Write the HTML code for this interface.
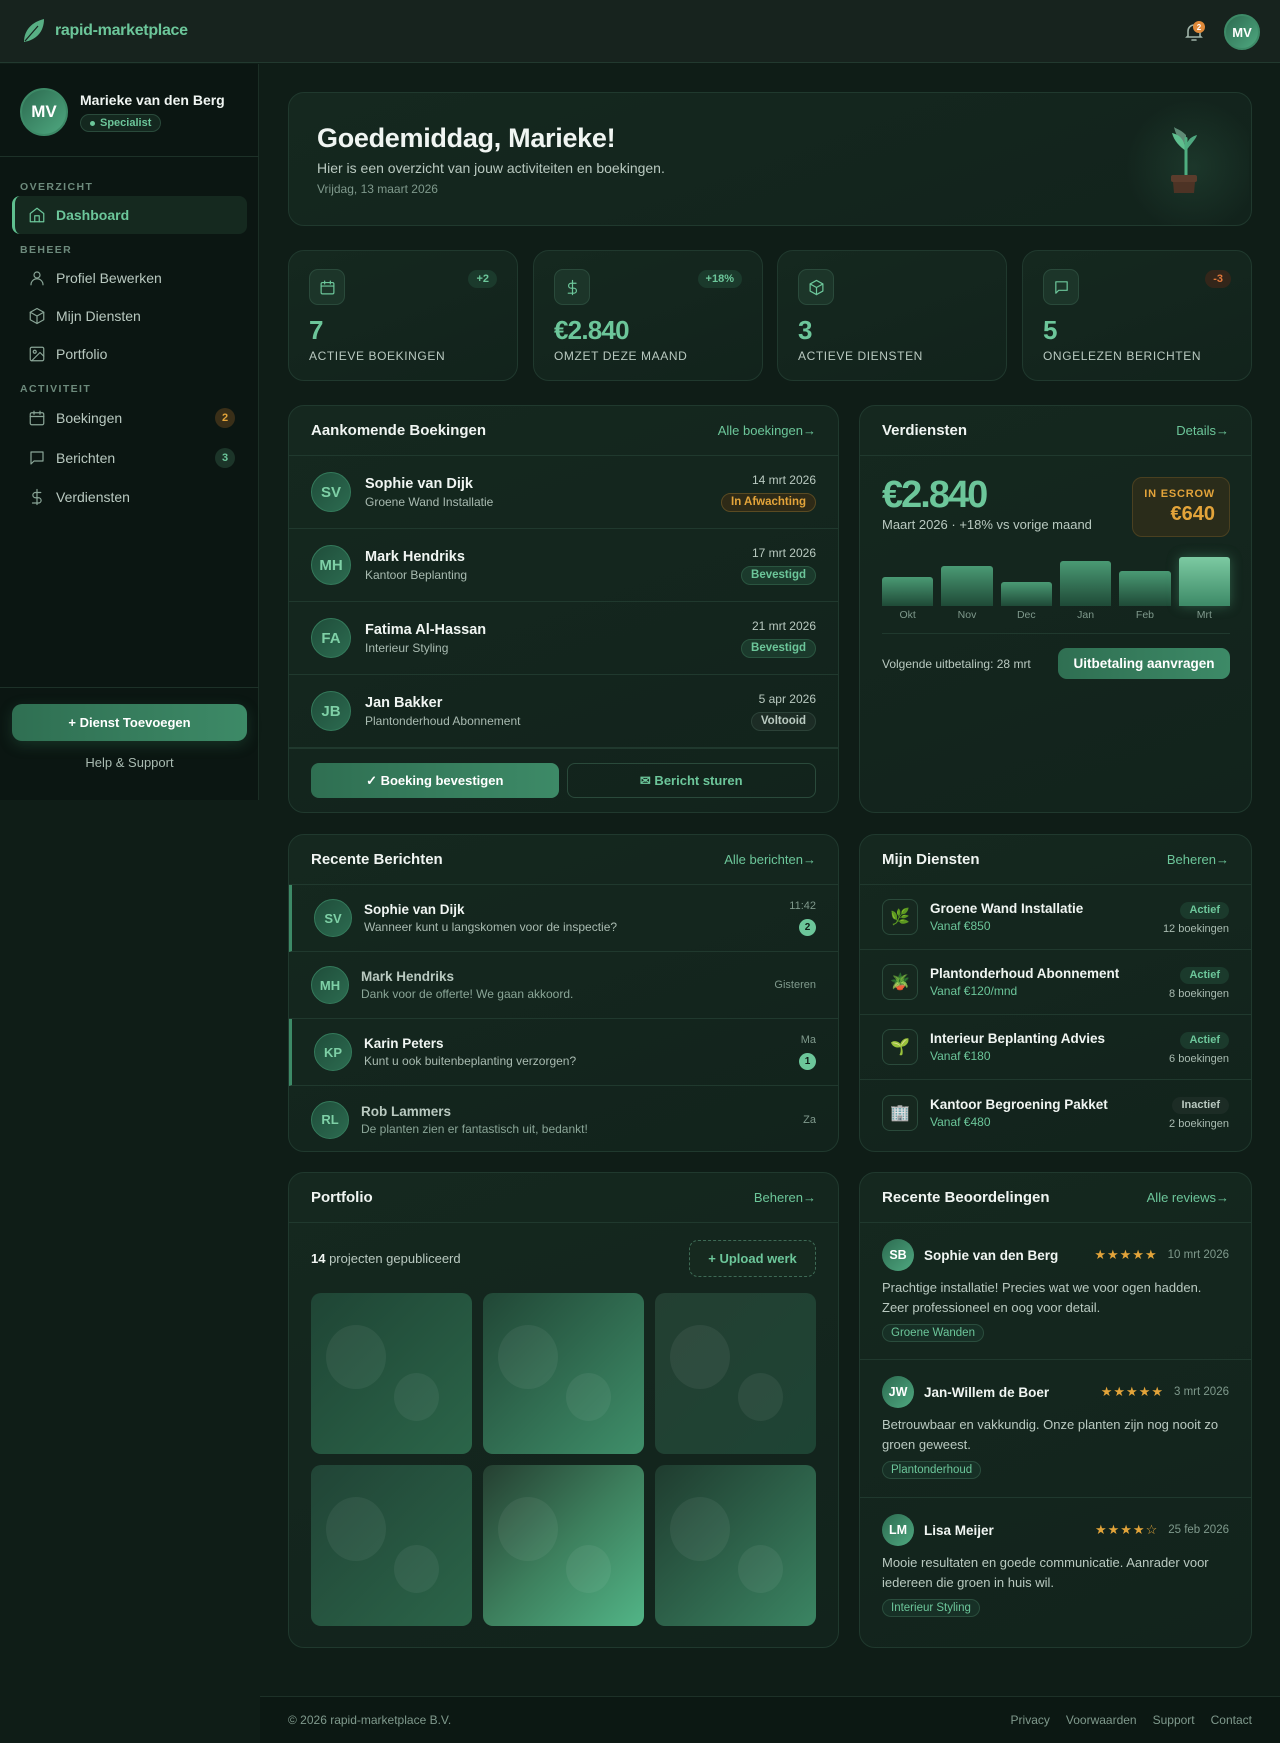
<!DOCTYPE html>
<html><head><meta charset="utf-8">
<style>
*{box-sizing:border-box;margin:0;padding:0}
body{width:1280px;height:1743px;background:#0f1d17;font-family:"Liberation Sans",sans-serif;color:#e6efe9;position:relative;overflow:hidden}
.hdr{position:absolute;left:0;top:0;width:1280px;height:63px;background:#17231e;border-bottom:1px solid #22392f}
.logo{position:absolute;left:22px;top:18px;display:flex;align-items:center;gap:9px;color:#6cc69a;font-weight:bold;font-size:16px;letter-spacing:-0.3px}
.side{position:absolute;left:0;top:64px;width:259px;height:736px;background:#0b1612;border-right:1px solid #1b2e25}
.av{border-radius:50%;background:linear-gradient(135deg,#2c6b50,#4fa880);color:#fff;font-weight:bold;display:flex;align-items:center;justify-content:center;border:2px solid #3d8a67}
.lbl{position:absolute;left:20px;font-size:10.5px;font-weight:bold;letter-spacing:1.4px;color:#6d8a7c}
.nav{position:absolute;left:12px;width:235px;height:38px;display:flex;align-items:center;padding-left:16px;gap:10px;font-size:14px;color:#b9c9c0}
.nav svg{width:18px;height:18px;stroke:#8aa597;fill:none;stroke-width:1.6;stroke-linecap:round;stroke-linejoin:round}
.nav.act{background:#15291f;border-left:3px solid #5fbf8f;border-radius:8px;color:#6cc69a;font-weight:bold;padding-left:13px}
.nav.act svg{stroke:#6cc69a}
.bd{position:absolute;right:12px;width:20px;height:20px;border-radius:50%;font-size:11px;font-weight:bold;display:flex;align-items:center;justify-content:center}
.card{position:absolute;background:linear-gradient(160deg,#15281f,#12231c);border:1px solid #20392e;border-radius:16px;overflow:hidden}
.ch{height:50px;border-bottom:1px solid #20392e;display:flex;align-items:center;justify-content:space-between;padding:0 22px}
.ch b{font-size:15px;color:#f0f5f2}
.ch span{font-size:13px;color:#6cc69a}
.stat{top:250px;width:230px;height:131px}
.sico{position:absolute;left:20px;top:18px;width:36px;height:36px;border-radius:9px;background:#1c3529;border:1px solid #2a4a3b;display:flex;align-items:center;justify-content:center}
.sico svg{width:17px;height:17px;stroke:#6cc69a;fill:none;stroke-width:1.7;stroke-linecap:round;stroke-linejoin:round}
.snum{position:absolute;left:20px;top:64px;font-size:26px;font-weight:bold;color:#6cc69a;letter-spacing:-0.8px}
.stxt{position:absolute;left:20px;top:98px;font-size:12px;color:#b9c9c0;letter-spacing:0.6px}
.chip{position:absolute;right:20px;top:19px;height:18px;padding:0 8px;border-radius:9px;font-size:11px;font-weight:bold;display:flex;align-items:center}
.row{display:flex;align-items:center;border-bottom:1px solid #20392e;padding:0 22px}
.ra{width:40px;height:40px;font-size:15px;color:#7ed0a6;background:linear-gradient(135deg,#1f4d3a,#2c6b50);border:1px solid #347a5b}
.nm{font-size:14.5px;font-weight:bold;color:#f0f5f2}
.sb{font-size:12px;color:#a9bbb1;margin-top:3px}
.pill{display:inline-block;height:19px;line-height:17px;padding:0 9px;border-radius:10px;font-size:11.5px;font-weight:bold}
.pg{background:#1b3a2c;border:1px solid #2a5540;color:#6cc69a}
.tile{position:absolute;width:161px;height:161px;border-radius:10px;overflow:hidden}
.tile i{position:absolute;border-radius:50%;background:rgba(255,255,255,0.06)}
.rv{border-bottom:1px solid #20392e;padding:16px 22px 0}
.tag{display:inline-block;height:18px;line-height:16px;padding:0 8px;border-radius:9px;background:#173026;border:1px solid #2a4d3d;color:#6cc69a;font-size:11.5px}
.st{color:#e3a43a;font-size:13px;letter-spacing:1px}
</style></head><body>

<div class="hdr">
 <div class="logo"><svg width="24" height="26" viewBox="0 0 24 26"><path d="M2 24 C2 12 10 4 22 1 C22 14 14 22 2 24Z" fill="#5fbf8f" opacity="0.9"/><path d="M3 23 L16 8" stroke="#17231e" stroke-width="1.2"/></svg>rapid-marketplace</div>
 <svg style="position:absolute;left:1185px;top:22px" width="18" height="20" viewBox="0 0 18 20" fill="none" stroke="#9fb3a8" stroke-width="1.6" stroke-linecap="round"><path d="M3 14 V9 a6 6 0 0 1 12 0 V14 L16 15 H2 Z"/><path d="M7 18 h4"/></svg>
 <div style="position:absolute;left:1193px;top:21px;width:12px;height:12px;border-radius:50%;background:#e08a3a;color:#fff;font-size:8px;font-weight:bold;display:flex;align-items:center;justify-content:center">2</div>
 <div class="av" style="position:absolute;left:1224px;top:14px;width:36px;height:36px;font-size:13px">MV</div>
</div>

<div class="side">
 <div class="av" style="position:absolute;left:20px;top:24px;width:48px;height:48px;font-size:17px">MV</div>
 <div style="position:absolute;left:80px;top:28px;font-size:14px;font-weight:bold;color:#f0f5f2">Marieke van den Berg</div>
 <div style="position:absolute;left:80px;top:50px;height:18px;padding:0 9px;border-radius:9px;background:#14281f;border:1px solid #2a4a3b;font-size:11px;font-weight:bold;color:#6cc69a;display:flex;align-items:center;gap:5px"><span style="width:5px;height:5px;border-radius:50%;background:#6cc69a"></span>Specialist</div>
 <div style="position:absolute;left:0;top:92px;width:259px;border-top:1px solid #1d3128"></div>
 <div class="lbl" style="top:117px">OVERZICHT</div>
 <div class="nav act" style="top:132px"><svg viewBox="0 0 24 24"><path d="M3 10 L12 3 L21 10 V21 H3 Z"/><path d="M9 21 V13 H15 V21"/></svg>Dashboard</div>
 <div class="lbl" style="top:180px">BEHEER</div>
 <div class="nav" style="top:195px"><svg viewBox="0 0 24 24"><circle cx="12" cy="8" r="4"/><path d="M4 21 a8 8 0 0 1 16 0"/></svg>Profiel Bewerken</div>
 <div class="nav" style="top:233px"><svg viewBox="0 0 24 24"><path d="M12 2 L21 7 V17 L12 22 L3 17 V7 Z"/><path d="M3 7 L12 12 L21 7 M12 12 V22"/></svg>Mijn Diensten</div>
 <div class="nav" style="top:271px"><svg viewBox="0 0 24 24"><rect x="3" y="3" width="18" height="18" rx="2"/><circle cx="9" cy="9" r="2"/><path d="M21 15 L16 10 L5 21"/></svg>Portfolio</div>
 <div class="lbl" style="top:319px">ACTIVITEIT</div>
 <div class="nav" style="top:335px"><svg viewBox="0 0 24 24"><rect x="3" y="5" width="18" height="16" rx="2"/><path d="M3 10 H21 M8 3 V7 M16 3 V7"/></svg>Boekingen<span class="bd" style="background:#3a2f18;color:#e3a43a;top:9px">2</span></div>
 <div class="nav" style="top:375px"><svg viewBox="0 0 24 24"><path d="M4 4 H20 V16 H8 L4 20 Z"/></svg>Berichten<span class="bd" style="background:#1c3529;color:#6cc69a;top:9px">3</span></div>
 <div class="nav" style="top:414px"><svg viewBox="0 0 24 24"><path d="M12 2 V22 M17 6 H10 a3.5 3.5 0 0 0 0 7 H14 a3.5 3.5 0 0 1 0 7 H6"/></svg>Verdiensten</div>
 <div style="position:absolute;left:0;top:623px;width:259px;border-top:1px solid #1d3128"></div>
 <div style="position:absolute;left:12px;top:640px;width:235px;height:37px;border-radius:10px;background:linear-gradient(90deg,#2f6f52,#3d8a67);color:#fff;font-weight:bold;font-size:13px;display:flex;align-items:center;justify-content:center;box-shadow:0 4px 14px rgba(60,140,100,0.25)">+ Dienst Toevoegen</div>
 <div style="position:absolute;left:0;top:691px;width:259px;text-align:center;font-size:13px;color:#a9bbb1">Help &amp; Support</div>
</div>

<!-- Welcome -->
<div class="card" style="left:288px;top:92px;width:964px;height:134px">
 <div style="position:absolute;left:28px;top:30px;font-size:27px;font-weight:bold;color:#f0f5f2;letter-spacing:-0.3px">Goedemiddag, Marieke!</div>
 <div style="position:absolute;left:28px;top:67px;font-size:14px;color:#b9c9c0">Hier is een overzicht van jouw activiteiten en boekingen.</div>
 <div style="position:absolute;left:28px;top:89px;font-size:12px;color:#7f998c">Vrijdag, 13 maart 2026</div>
 <div style="position:absolute;left:820px;top:0;width:140px;height:134px;background:radial-gradient(circle at 60% 55%,rgba(95,191,143,0.12),transparent 60%)"></div>
 <svg style="position:absolute;left:877px;top:30px" width="40" height="70" viewBox="0 0 40 70"><path d="M20 12 C14 6 10 6 8 4 C10 12 12 16 20 22Z" fill="#8fc9ad" opacity="0.6"/><path d="M20 28 C14 24 8 18 6 10 C14 12 18 16 20 28Z" fill="#5fbf8f"/><path d="M20 28 C24 22 30 16 31 12 C24 14 20 18 20 28Z" fill="#4fa880"/><rect x="18.5" y="14" width="3" height="40" fill="#4fae80" rx="1.5"/><rect x="5" y="52" width="26" height="7" rx="2" fill="#5b3c2c"/><path d="M7 59 H29 L28 70 H8 Z" fill="#4d3325"/></svg>
</div>

<!-- stats -->
<div class="card stat" style="left:288px"><div class="sico"><svg viewBox="0 0 24 24"><rect x="3" y="5" width="18" height="16" rx="2"/><path d="M3 10 H21 M8 3 V7 M16 3 V7"/></svg></div><div class="chip" style="background:#1b3a2c;color:#6cc69a">+2</div><div class="snum">7</div><div class="stxt">ACTIEVE BOEKINGEN</div></div>
<div class="card stat" style="left:533px"><div class="sico"><svg viewBox="0 0 24 24"><path d="M12 2 V22 M17 6 H10 a3.5 3.5 0 0 0 0 7 H14 a3.5 3.5 0 0 1 0 7 H6"/></svg></div><div class="chip" style="background:#1b3a2c;color:#6cc69a">+18%</div><div class="snum">€2.840</div><div class="stxt">OMZET DEZE MAAND</div></div>
<div class="card stat" style="left:777px"><div class="sico"><svg viewBox="0 0 24 24"><path d="M12 2 L21 7 V17 L12 22 L3 17 V7 Z"/><path d="M3 7 L12 12 L21 7 M12 12 V22"/></svg></div><div class="snum">3</div><div class="stxt">ACTIEVE DIENSTEN</div></div>
<div class="card stat" style="left:1022px"><div class="sico"><svg viewBox="0 0 24 24"><path d="M4 4 H20 V16 H8 L4 20 Z"/></svg></div><div class="chip" style="background:#33261a;color:#e0783a">-3</div><div class="snum">5</div><div class="stxt">ONGELEZEN BERICHTEN</div></div>

<!-- bookings -->
<div class="card" style="left:288px;top:405px;width:551px;height:408px">
 <div class="ch"><b>Aankomende Boekingen</b><span>Alle boekingen→</span></div>
 <div class="row" style="height:73px"><div class="av ra">SV</div><div style="margin-left:14px;flex:1"><div class="nm">Sophie van Dijk</div><div class="sb">Groene Wand Installatie</div></div><div style="text-align:right"><div style="font-size:12px;color:#b9c9c0;margin-bottom:5px">14 mrt 2026</div><span class="pill" style="background:#2e2a17;border:1px solid #5a4a22;color:#e3a43a">In Afwachting</span></div></div>
 <div class="row" style="height:73px"><div class="av ra">MH</div><div style="margin-left:14px;flex:1"><div class="nm">Mark Hendriks</div><div class="sb">Kantoor Beplanting</div></div><div style="text-align:right"><div style="font-size:12px;color:#b9c9c0;margin-bottom:5px">17 mrt 2026</div><span class="pill pg">Bevestigd</span></div></div>
 <div class="row" style="height:73px"><div class="av ra">FA</div><div style="margin-left:14px;flex:1"><div class="nm">Fatima Al-Hassan</div><div class="sb">Interieur Styling</div></div><div style="text-align:right"><div style="font-size:12px;color:#b9c9c0;margin-bottom:5px">21 mrt 2026</div><span class="pill pg">Bevestigd</span></div></div>
 <div class="row" style="height:74px;border-bottom:2px solid #20392e"><div class="av ra">JB</div><div style="margin-left:14px;flex:1"><div class="nm">Jan Bakker</div><div class="sb">Plantonderhoud Abonnement</div></div><div style="text-align:right"><div style="font-size:12px;color:#b9c9c0;margin-bottom:5px">5 apr 2026</div><span class="pill" style="background:#1c2c25;border:1px solid #2c4238;color:#b9c9c0">Voltooid</span></div></div>
 <div style="display:flex;gap:8px;padding:14px 22px 0">
  <div style="flex:1;height:35px;border-radius:8px;background:linear-gradient(90deg,#2f6f52,#3d8a67);color:#fff;font-weight:bold;font-size:13px;display:flex;align-items:center;justify-content:center">✓ Boeking bevestigen</div>
  <div style="flex:1;height:35px;border-radius:8px;border:1px solid #2a4a3b;color:#6cc69a;font-weight:bold;font-size:13px;display:flex;align-items:center;justify-content:center">✉ Bericht sturen</div>
 </div>
</div>

<!-- earnings -->
<div class="card" style="left:859px;top:405px;width:393px;height:408px">
 <div class="ch"><b>Verdiensten</b><span>Details→</span></div>
 <div style="position:absolute;left:22px;top:68px;font-size:38px;font-weight:bold;color:#6cc69a;letter-spacing:-2px">€2.840</div>
 <div style="position:absolute;left:22px;top:111px;font-size:13px;color:#b9c9c0">Maart 2026 · +18% vs vorige maand</div>
 <div style="position:absolute;left:272px;top:71px;width:98px;height:60px;border-radius:10px;background:#2a2c1a;border:1px solid #4a4020;text-align:right;padding:10px 14px 0 0"><div style="font-size:11px;font-weight:bold;color:#e3a43a;letter-spacing:0.8px">IN ESCROW</div><div style="font-size:20px;font-weight:bold;color:#e3a43a;margin-top:3px">€640</div></div>
 <div style="position:absolute;left:22px;top:140px;width:348px;height:60px;display:flex;gap:8px;align-items:flex-end">
  <div style="flex:1;height:29px;border-radius:3px 3px 0 0;background:linear-gradient(#4a9a74,#1f4a37)"></div>
  <div style="flex:1;height:40px;border-radius:3px 3px 0 0;background:linear-gradient(#4a9a74,#1f4a37)"></div>
  <div style="flex:1;height:24px;border-radius:3px 3px 0 0;background:linear-gradient(#4a9a74,#1f4a37)"></div>
  <div style="flex:1;height:45px;border-radius:3px 3px 0 0;background:linear-gradient(#4a9a74,#1f4a37)"></div>
  <div style="flex:1;height:35px;border-radius:3px 3px 0 0;background:linear-gradient(#4a9a74,#1f4a37)"></div>
  <div style="flex:1;height:49px;border-radius:3px 3px 0 0;background:linear-gradient(#7ccaa2,#3d8a67);box-shadow:0 0 12px rgba(95,191,143,0.35)"></div>
 </div>
 <div style="position:absolute;left:22px;top:203px;width:348px;display:flex;gap:8px;font-size:10.5px;color:#7f998c;text-align:center"><span style="flex:1">Okt</span><span style="flex:1">Nov</span><span style="flex:1">Dec</span><span style="flex:1">Jan</span><span style="flex:1">Feb</span><span style="flex:1">Mrt</span></div>
 <div style="position:absolute;left:22px;top:227px;width:348px;border-top:1px solid #20392e"></div>
 <div style="position:absolute;left:22px;top:251px;font-size:12px;color:#b9c9c0">Volgende uitbetaling: 28 mrt</div>
 <div style="position:absolute;left:198px;top:242px;width:172px;height:31px;border-radius:9px;background:linear-gradient(90deg,#2f6f52,#3d8a67);color:#fff;font-weight:bold;font-size:13.5px;display:flex;align-items:center;justify-content:center">Uitbetaling aanvragen</div>
</div>

<!-- messages -->
<div class="card" style="left:288px;top:834px;width:551px;height:318px">
 <div class="ch"><b>Recente Berichten</b><span>Alle berichten→</span></div>
 <div class="row" style="height:67px;border-left:3px solid #3d8a67;padding-left:22px"><div class="av ra" style="width:38px;height:38px;font-size:13px">SV</div><div style="margin-left:12px;flex:1"><div class="nm" style="font-size:13.5px">Sophie van Dijk</div><div class="sb">Wanneer kunt u langskomen voor de inspectie?</div></div><div style="text-align:right"><div style="font-size:11px;color:#7f998c;margin-bottom:5px">11:42</div><span style="display:inline-flex;width:17px;height:17px;border-radius:50%;background:#6cc69a;color:#0f1d17;font-size:10px;font-weight:bold;align-items:center;justify-content:center">2</span></div></div>
 <div class="row" style="height:67px"><div class="av ra" style="width:38px;height:38px;font-size:13px">MH</div><div style="margin-left:12px;flex:1"><div class="nm" style="font-size:13.5px;color:#b9c9c0">Mark Hendriks</div><div class="sb" style="color:#8aa597">Dank voor de offerte! We gaan akkoord.</div></div><div style="font-size:11px;color:#7f998c">Gisteren</div></div>
 <div class="row" style="height:67px;border-left:3px solid #3d8a67;padding-left:22px"><div class="av ra" style="width:38px;height:38px;font-size:13px">KP</div><div style="margin-left:12px;flex:1"><div class="nm" style="font-size:13.5px">Karin Peters</div><div class="sb">Kunt u ook buitenbeplanting verzorgen?</div></div><div style="text-align:right"><div style="font-size:11px;color:#7f998c;margin-bottom:5px">Ma</div><span style="display:inline-flex;width:17px;height:17px;border-radius:50%;background:#6cc69a;color:#0f1d17;font-size:10px;font-weight:bold;align-items:center;justify-content:center">1</span></div></div>
 <div class="row" style="height:67px;border-bottom:none"><div class="av ra" style="width:38px;height:38px;font-size:13px">RL</div><div style="margin-left:12px;flex:1"><div class="nm" style="font-size:13.5px;color:#b9c9c0">Rob Lammers</div><div class="sb" style="color:#8aa597">De planten zien er fantastisch uit, bedankt!</div></div><div style="font-size:11px;color:#7f998c">Za</div></div>
</div>

<!-- services -->
<div class="card" style="left:859px;top:834px;width:393px;height:318px">
 <div class="ch"><b>Mijn Diensten</b><span>Beheren→</span></div>
 <div class="row" style="height:65px"><div style="width:36px;height:36px;border-radius:8px;background:#16281f;border:1px solid #2a4a3b;display:flex;align-items:center;justify-content:center;font-size:16px">🌿</div><div style="margin-left:12px;flex:1"><div class="nm" style="font-size:13.5px">Groene Wand Installatie</div><div class="sb" style="color:#6cc69a">Vanaf €850</div></div><div style="text-align:right"><span class="pill" style="background:#1b3a2c;color:#6cc69a;font-size:11px;height:17px;line-height:17px">Actief</span><div style="font-size:11px;color:#a9bbb1;margin-top:4px">12 boekingen</div></div></div>
 <div class="row" style="height:65px"><div style="width:36px;height:36px;border-radius:8px;background:#16281f;border:1px solid #2a4a3b;display:flex;align-items:center;justify-content:center;font-size:16px">🪴</div><div style="margin-left:12px;flex:1"><div class="nm" style="font-size:13.5px">Plantonderhoud Abonnement</div><div class="sb" style="color:#6cc69a">Vanaf €120/mnd</div></div><div style="text-align:right"><span class="pill" style="background:#1b3a2c;color:#6cc69a;font-size:11px;height:17px;line-height:17px">Actief</span><div style="font-size:11px;color:#a9bbb1;margin-top:4px">8 boekingen</div></div></div>
 <div class="row" style="height:65px"><div style="width:36px;height:36px;border-radius:8px;background:#16281f;border:1px solid #2a4a3b;display:flex;align-items:center;justify-content:center;font-size:16px">🌱</div><div style="margin-left:12px;flex:1"><div class="nm" style="font-size:13.5px">Interieur Beplanting Advies</div><div class="sb" style="color:#6cc69a">Vanaf €180</div></div><div style="text-align:right"><span class="pill" style="background:#1b3a2c;color:#6cc69a;font-size:11px;height:17px;line-height:17px">Actief</span><div style="font-size:11px;color:#a9bbb1;margin-top:4px">6 boekingen</div></div></div>
 <div class="row" style="height:65px;border-bottom:none"><div style="width:36px;height:36px;border-radius:8px;background:#16281f;border:1px solid #2a4a3b;display:flex;align-items:center;justify-content:center;font-size:16px">🏢</div><div style="margin-left:12px;flex:1"><div class="nm" style="font-size:13.5px">Kantoor Begroening Pakket</div><div class="sb" style="color:#6cc69a">Vanaf €480</div></div><div style="text-align:right"><span class="pill" style="background:#1c2c25;color:#b9c9c0;font-size:11px;height:17px;line-height:17px">Inactief</span><div style="font-size:11px;color:#a9bbb1;margin-top:4px">2 boekingen</div></div></div>
</div>

<!-- portfolio -->
<div class="card" style="left:288px;top:1172px;width:551px;height:476px">
 <div class="ch"><b>Portfolio</b><span>Beheren→</span></div>
 <div style="position:absolute;left:22px;top:78px;font-size:13px;color:#b9c9c0"><b style="color:#f0f5f2">14</b> projecten gepubliceerd</div>
 <div style="position:absolute;left:400px;top:67px;width:127px;height:37px;border-radius:9px;border:1px dashed #3d6a55;background:#16291f;color:#6cc69a;font-weight:bold;font-size:13px;display:flex;align-items:center;justify-content:center">+ Upload werk</div>
 <div class="tile" style="left:22px;top:120px;background:linear-gradient(135deg,#1f4535,#2b6549)"><i style="left:15px;top:32px;width:60px;height:64px"></i><i style="left:83px;top:80px;width:45px;height:48px"></i></div>
 <div class="tile" style="left:194px;top:120px;background:linear-gradient(135deg,#214736,#3f8f6a)"><i style="left:15px;top:32px;width:60px;height:64px"></i><i style="left:83px;top:80px;width:45px;height:48px"></i></div>
 <div class="tile" style="left:366px;top:120px;background:linear-gradient(135deg,#233f32,#1e4434)"><i style="left:15px;top:32px;width:60px;height:64px"></i><i style="left:83px;top:80px;width:45px;height:48px"></i></div>
 <div class="tile" style="left:22px;top:292px;background:linear-gradient(135deg,#214436,#2b6549)"><i style="left:15px;top:32px;width:60px;height:64px"></i><i style="left:83px;top:80px;width:45px;height:48px"></i></div>
 <div class="tile" style="left:194px;top:292px;background:linear-gradient(135deg,#253f31,#3d7f5d 50%,#52b587)"><i style="left:15px;top:32px;width:60px;height:64px"></i><i style="left:83px;top:80px;width:45px;height:48px"></i></div>
 <div class="tile" style="left:366px;top:292px;background:linear-gradient(135deg,#1f3c2f,#3b8563)"><i style="left:15px;top:32px;width:60px;height:64px"></i><i style="left:83px;top:80px;width:45px;height:48px"></i></div>
</div>

<!-- reviews -->
<div class="card" style="left:859px;top:1172px;width:393px;height:476px">
 <div class="ch"><b>Recente Beoordelingen</b><span>Alle reviews→</span></div>
 <div class="rv" style="height:137px">
  <div style="display:flex;align-items:center"><div class="av" style="width:32px;height:32px;font-size:12.5px;border:none">SB</div><div class="nm" style="margin-left:10px;flex:1;font-size:13.5px">Sophie van den Berg</div><span class="st">★★★★★</span><span style="font-size:11.5px;color:#7f998c;margin-left:10px">10 mrt 2026</span></div>
  <div style="font-size:13px;color:#b9c9c0;line-height:20px;margin-top:7px">Prachtige installatie! Precies wat we voor ogen hadden. Zeer professioneel en oog voor detail.</div>
  <div style="margin-top:5px"><span class="tag">Groene Wanden</span></div>
 </div>
 <div class="rv" style="height:138px">
  <div style="display:flex;align-items:center"><div class="av" style="width:32px;height:32px;font-size:12.5px;border:none">JW</div><div class="nm" style="margin-left:10px;flex:1;font-size:13.5px">Jan-Willem de Boer</div><span class="st">★★★★★</span><span style="font-size:11.5px;color:#7f998c;margin-left:10px">3 mrt 2026</span></div>
  <div style="font-size:13px;color:#b9c9c0;line-height:20px;margin-top:7px">Betrouwbaar en vakkundig. Onze planten zijn nog nooit zo groen geweest.</div>
  <div style="margin-top:5px"><span class="tag">Plantonderhoud</span></div>
 </div>
 <div class="rv" style="border-bottom:none">
  <div style="display:flex;align-items:center"><div class="av" style="width:32px;height:32px;font-size:12.5px;border:none">LM</div><div class="nm" style="margin-left:10px;flex:1;font-size:13.5px">Lisa Meijer</div><span class="st">★★★★☆</span><span style="font-size:11.5px;color:#7f998c;margin-left:10px">25 feb 2026</span></div>
  <div style="font-size:13px;color:#b9c9c0;line-height:20px;margin-top:7px">Mooie resultaten en goede communicatie. Aanrader voor iedereen die groen in huis wil.</div>
  <div style="margin-top:5px"><span class="tag">Interieur Styling</span></div>
 </div>
</div>

<!-- footer -->
<div style="position:absolute;left:260px;top:1696px;width:1020px;height:47px;background:#0c1813;border-top:1px solid #1d3128;display:flex;align-items:center;justify-content:space-between;padding:0 28px;font-size:12px;color:#7f998c">
 <span>© 2026 rapid-marketplace B.V.</span>
 <span style="display:flex;gap:16px"><span>Privacy</span><span>Voorwaarden</span><span>Support</span><span>Contact</span></span>
</div>
</body></html>
